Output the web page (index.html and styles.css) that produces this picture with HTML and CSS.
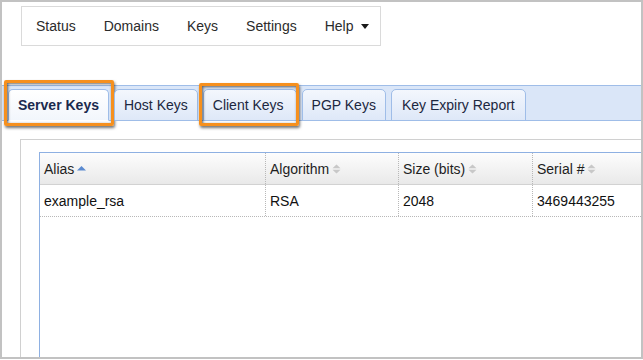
FILE: index.html
```html
<!DOCTYPE html>
<html>
<head>
<meta charset="utf-8">
<link rel="stylesheet" href="styles.css">
</head>
<body>
<div class="frame">
  <nav class="menu">
    <span class="menu-item">Status</span>
    <span class="menu-item">Domains</span>
    <span class="menu-item">Keys</span>
    <span class="menu-item">Settings</span>
    <span class="menu-item">Help<span class="caret"></span></span>
  </nav>
  <div class="tabbar">
    <div class="tab active">Server Keys<span class="highlight hl-server"></span></div>
    <div class="tab">Host Keys</div>
    <div class="tab tab-client">Client Keys<span class="highlight hl-client"></span></div>
    <div class="tab">PGP Keys</div>
    <div class="tab tab-wide">Key Expiry Report</div>
  </div>
  <div class="panel">
    <div class="grid">
      <div class="row head">
        <div class="cell">Alias<svg class="sort" width="9" height="10" viewBox="0 0 9 10"><path d="M0 6.5 L4.5 2 L9 6.5 Z" fill="#5b8ad0"/></svg></div>
        <div class="cell">Algorithm<svg class="sort" width="9" height="10" viewBox="0 0 9 10"><path d="M0.5 4.2 L4.5 0.5 L8.5 4.2 Z M0.5 5.8 L8.5 5.8 L4.5 9.5 Z" fill="#c8c8c8"/></svg></div>
        <div class="cell">Size (bits)<svg class="sort" width="9" height="10" viewBox="0 0 9 10"><path d="M0.5 4.2 L4.5 0.5 L8.5 4.2 Z M0.5 5.8 L8.5 5.8 L4.5 9.5 Z" fill="#c8c8c8"/></svg></div>
        <div class="cell">Serial #<svg class="sort" width="9" height="10" viewBox="0 0 9 10"><path d="M0.5 4.2 L4.5 0.5 L8.5 4.2 Z M0.5 5.8 L8.5 5.8 L4.5 9.5 Z" fill="#c8c8c8"/></svg></div>
      </div>
      <div class="row body">
        <div class="cell">example_rsa</div>
        <div class="cell">RSA</div>
        <div class="cell">2048</div>
        <div class="cell">3469443255</div>
      </div>
    </div>
  </div>
</div>
</body>
</html>
```
FILE: styles.css
```css
html, body {
  margin: 0;
  padding: 0;
  background: #fff;
}
body {
  font-family: "Liberation Sans", Arial, sans-serif;
  font-size: 14px;
}
.frame {
  width: 643px;
  height: 359px;
  box-sizing: border-box;
  border: 2px solid #c2c2c2;
  display: flex;
  flex-direction: column;
  overflow: hidden;
}
.menu {
  margin: 4px 0 0 19px;
  width: 360px;
  height: 40px;
  box-sizing: border-box;
  border: 1px solid #dadada;
  display: flex;
  align-items: center;
  flex-shrink: 0;
}
.menu-item {
  padding: 0 14px;
  color: #2b2b2b;
  display: flex;
  align-items: center;
}
.caret {
  margin-left: 8px;
  width: 0;
  height: 0;
  border-left: 4px solid transparent;
  border-right: 4px solid transparent;
  border-top: 5px solid #1a1a1a;
  margin-top: 1px;
}
.tabbar {
  margin-top: 39px;
  display: flex;
  align-items: flex-end;
  gap: 5px;
  padding: 3px 0 0 6px;
  background: #dae6f8;
  border-top: 1px solid #9fbde8;
  border-bottom: 1px solid #9fbde8;
  flex-shrink: 0;
}
.tab {
  position: relative;
  height: 32px;
  margin-bottom: -1px;
  box-sizing: border-box;
  padding: 0 9px;
  border: 1px solid #9fbde8;
  border-radius: 5px 5px 0 0;
  background: linear-gradient(#f3f7fd, #dee8f8);
  color: #1c2740;
  display: flex;
  align-items: center;
  white-space: nowrap;
}
.tab-client {
  padding-right: 12px;
}
.tab-wide {
  padding: 0 10px;
}
.tab.active {
  font-weight: bold;
  background: linear-gradient(#ffffff, #f2f6fc);
  border-bottom-color: #fff;
  color: #1b2a4e;
}
.highlight {
  position: absolute;
  box-sizing: border-box;
  border: 3px solid #f6901e;
  border-radius: 2px;
  box-shadow: 1px 2px 3px rgba(0,0,0,0.55), inset 1px 1px 3px rgba(0,0,0,0.6);
  pointer-events: none;
}
.hl-server {
  left: -5px;
  top: -10px;
  width: 110px;
  height: 46px;
}
.hl-client {
  left: -5px;
  top: -7px;
  width: 100px;
  height: 43px;
}
.panel {
  flex: 1;
  margin: 18px 0 0 18px;
  border-top: 1px solid #d0d0d0;
  border-left: 1px solid #d0d0d0;
  padding: 12px 0 0 18px;
  display: flex;
  flex-direction: column;
}
.grid {
  flex: 1;
  border-top: 1px solid #8eb0e2;
  border-left: 1px solid #8eb0e2;
}
.row {
  display: grid;
  grid-template-columns: 226px 133px 134px 1fr;
  height: 32px;
  box-sizing: border-box;
}
.row.head {
  background: linear-gradient(#fdfdfd, #e9e9e9);
  border-bottom: 1px solid #d2d2d2;
  color: #1e1e1e;
}
.row.body {
  border-bottom: 1px dotted #b8b8b8;
  color: #111;
}
.cell {
  display: flex;
  align-items: center;
  padding-left: 4px;
  border-right: 1px dotted #b8b8b8;
  white-space: nowrap;
}
.cell:last-child {
  border-right: none;
}
.sort {
  margin-left: 3px;
  margin-top: 1px;
}
```
